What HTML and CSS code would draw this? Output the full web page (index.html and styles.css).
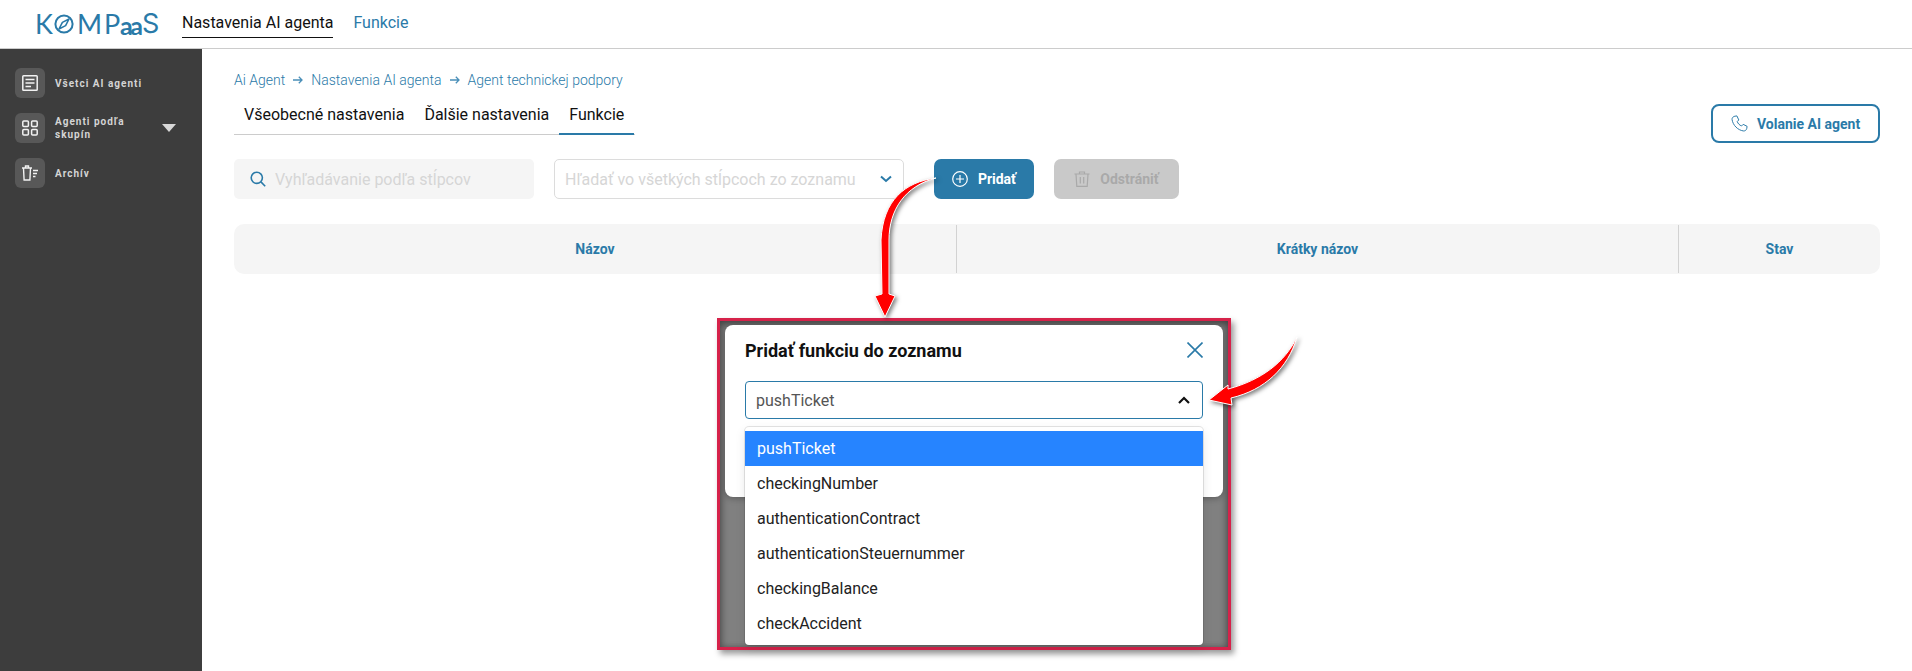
FILE: index.html
```html
<!DOCTYPE html>
<html lang="sk">
<head>
<meta charset="utf-8">
<title>Kompaas</title>
<link rel="stylesheet" href="styles.css">
</head>
<body>
<header class="topbar">
  <div class="logo">
    <span class="logo-k">K</span>
    <svg class="logo-o" viewBox="0 0 20 20" width="20" height="20"><circle cx="10" cy="10" r="8.600" fill="none" stroke="#2a7aa8" stroke-width="2"/><path d="M15 5 L11.600 11.600 L5 15 L8.400 8.400 Z" fill="none" stroke="#2a7aa8" stroke-width="1.600" stroke-linejoin="round"/></svg>
    <span class="logo-m">M</span>
    <span class="logo-p">P</span>
    <span class="logo-a">aa</span>
    <span class="logo-s">S</span>
  </div>
  <nav class="topnav">
    <a class="topnav-item active">Nastavenia AI agenta</a>
    <a class="topnav-item">Funkcie</a>
  </nav>
</header>
<div class="layout">
  <aside class="sidebar">
    <div class="side-item">
      <span class="side-icon"><svg viewBox="0 0 16 16" width="16" height="16" fill="none" stroke="#f2f2f2" stroke-width="1.500"><rect x="0.800" y="0.800" width="14.400" height="14.400" rx="0.800"/><path d="M3.500 4.500h9M3.500 8h9M3.500 11.500h5.500"/></svg></span>
      <span class="side-label">Všetci AI agenti</span>
    </div>
    <div class="side-item">
      <span class="side-icon"><svg viewBox="0 0 16 16" width="16" height="16" fill="none" stroke="#f2f2f2" stroke-width="1.500"><rect x="0.800" y="1" width="5.600" height="5.600" rx="1"/><rect x="9.600" y="1" width="5.600" height="5.600" rx="1"/><rect x="0.800" y="9.400" width="5.600" height="5.600" rx="1"/><rect x="9.600" y="9.400" width="5.600" height="5.600" rx="1"/></svg></span>
      <span class="side-label side-label-wrap">Agenti podľa skupín</span>
      <span class="side-caret"></span>
    </div>
    <div class="side-item">
      <span class="side-icon"><svg viewBox="0 0 16 16" width="16" height="16" fill="none" stroke="#f2f2f2" stroke-width="1.400"><path d="M0 3h10M3.500 3V1h3v2M1.500 3l.6 12h5.800l.6-12"/><path d="M11 5.500h5M11 8.500h4M11 11.500h2.500"/></svg></span>
      <span class="side-label">Archív</span>
    </div>
  </aside>
  <main class="main">
    <div class="toprow">
      <div class="toprow-left">
        <div class="crumbs">
          <span>Ai Agent</span>
          <svg class="crumb-arrow" viewBox="0 0 10 8" width="10" height="8" fill="none" stroke="#4a8fb8" stroke-width="1.300"><path d="M0 4h9M5.800 0.800 L9 4 L5.800 7.200"/></svg>
          <span>Nastavenia AI agenta</span>
          <svg class="crumb-arrow" viewBox="0 0 10 8" width="10" height="8" fill="none" stroke="#4a8fb8" stroke-width="1.300"><path d="M0 4h9M5.800 0.800 L9 4 L5.800 7.200"/></svg>
          <span>Agent technickej podpory</span>
        </div>
        <div class="tabs">
          <a class="tab">Všeobecné nastavenia</a>
          <a class="tab">Ďalšie nastavenia</a>
          <a class="tab tab-active">Funkcie</a>
        </div>
      </div>
      <button class="btn-outline">
        <svg viewBox="0 0 24 24" width="17" height="17" fill="none" stroke="#2a7aa8" stroke-width="1.400" stroke-linejoin="round"><path d="M5.500 1.700 L8.300 1.300 L11 7 L8.800 9.300 C9.800 12 12 14.400 14.900 15.500 L17.200 13.200 L22.700 16 L22.300 18.800 C22 21 20 22.800 17.500 22.500 C9.500 21.300 2.800 14.500 1.500 6.500 C1.200 4 3.200 2 5.500 1.700 Z"/></svg>
        Volanie AI agent
      </button>
    </div>
    <div class="filters">
      <div class="search">
        <svg viewBox="0 0 16 16" width="16" height="16" fill="none" stroke="#2a7aa8" stroke-width="1.600"><circle cx="6.800" cy="6.800" r="5.600"/><path d="M10.900 10.900 L15.200 15.200"/></svg>
        <span>Vyhľadávanie podľa stĺpcov</span>
      </div>
      <div class="select">
        <span>Hľadať vo všetkých stĺpcoch zo zoznamu</span>
        <svg viewBox="0 0 12 8" width="12" height="8" fill="none" stroke="#2a7aa8" stroke-width="2"><path d="M1 1.500 L6 6 L11 1.500"/></svg>
      </div>
      <button class="btn btn-primary">
        <svg viewBox="0 0 16 16" width="16" height="16" fill="none" stroke="#fff" stroke-width="1.200"><circle cx="8" cy="8" r="7.300"/><path d="M8 4v8M4 8h8"/></svg>
        Pridať
      </button>
      <button class="btn btn-disabled">
        <svg viewBox="0 0 16 16" width="16" height="16" fill="none" stroke="#a9a9a9" stroke-width="1.200"><path d="M0.500 3h15M5.500 3V1h5v2M2 3l.8 12.300h10.400L14 3M6.300 6v6.500M9.700 6v6.500"/></svg>
        Odstrániť
      </button>
    </div>
    <div class="table-head">
      <div class="th">Názov</div>
      <div class="th">Krátky názov</div>
      <div class="th">Stav</div>
    </div>
  </main>
</div>

<section class="shot">
  <div class="dialog">
    <div class="dialog-head">
      <h2 class="dialog-title">Pridať funkciu do zoznamu</h2>
      <svg viewBox="0 0 16 16" width="16" height="16" fill="none" stroke="#2a7aa8" stroke-width="1.600"><path d="M0.500 0.500 L15.500 15.500 M15.500 0.500 L0.500 15.500"/></svg>
    </div>
    <div class="combo">
      <span>pushTicket</span>
      <svg viewBox="0 0 12 8" width="12" height="8" fill="none" stroke="#111" stroke-width="2.200"><path d="M1 7 L6 2 L11 7"/></svg>
    </div>
    <ul class="menu">
      <li class="opt opt-active">pushTicket</li>
      <li class="opt">checkingNumber</li>
      <li class="opt">authenticationContract</li>
      <li class="opt">authenticationSteuernummer</li>
      <li class="opt">checkingBalance</li>
      <li class="opt">checkAccident</li>
    </ul>
  </div>
</section>

<svg class="arrows" viewBox="0 0 1912 671" width="1912" height="671">
  <path class="arrow" d="M936 178 C905 182 883 200 881 240 L882 294 L875 296 L885 317 L895 296 L889 294 L889 240 C889 210 905 186 936 178 Z"/>
  <path class="arrow" d="M1297 337 C1285 362 1262 380 1228 389 L1228 385 L1209 400 L1232 405 L1231 398 C1265 390 1288 368 1297 337 Z"/>
</svg>
</body>
</html>
```

FILE: styles.css
```css
* { box-sizing: border-box; }
html, body { margin: 0; padding: 0; height: 671px; overflow: hidden; background: #fff; }
body { font-family: Roboto, "Liberation Sans", sans-serif; color: #111; position: relative; }

.topbar { height: 49px; border-bottom: 1px solid #ccc; display: flex; align-items: flex-start; padding-left: 35px; background: #fff; }
.logo { width: 147px; height: 48px; display: flex; align-items: center; color: #2a7aa8; font-family: Lato, Roboto, sans-serif; font-size: 27px; line-height: 48px; flex: none; }
.logo-k { width: 19px; }
.logo-o { flex: none; margin-right: 3px; }
.logo-m { width: 27px; }
.logo-p { width: 16px; }
.logo-a { width: 22px; font-size: 25px; font-weight: 700; letter-spacing: -2.500px; padding-top: 2px; }
.logo-s { width: 17px; font-family: Inter, Lato, sans-serif; }
.topnav { display: flex; gap: 20px; height: 38px; }
.topnav-item { font-size: 16px; line-height: 46px; color: #2a7aa8; height: 38px; }
.topnav-item.active { color: #111; border-bottom: 1px solid #111; }

.layout { display: flex; height: 622px; }
.sidebar { width: 202px; flex: none; background: #3d3d3d; padding: 19px 15px 0; display: flex; flex-direction: column; gap: 15px; }
.side-item { display: flex; align-items: center; height: 30px; }
.side-icon { width: 30px; height: 30px; border-radius: 6px; background: #585858; display: flex; align-items: center; justify-content: center; flex: none; }
.side-label { margin-left: 10px; font-size: 10px; line-height: 13px; font-weight: 700; letter-spacing: 1px; color: #d4d4d4; }
.side-label-wrap { width: 90px; }
.side-caret { margin-left: 17px; border-left: 7px solid transparent; border-right: 7px solid transparent; border-top: 8px solid #d8d8d8; }

.main { flex: 1; padding: 22px 32px 0; min-width: 0; }
.toprow { display: flex; justify-content: space-between; align-items: flex-end; margin-bottom: 16px; }
.toprow-left { padding-bottom: 8px; }
.crumbs { display: flex; align-items: center; font-size: 14px; font-weight: 300; line-height: 18px; color: #2a7aa8; margin-bottom: 9px; }
.crumb-arrow { margin: 0 8px; flex: none; }
.tabs { display: flex; border-bottom: 1px solid #ccc; height: 37px; width: 401px; }
.tab { padding: 0 10px; font-size: 16px; line-height: 34px; height: 37px; color: #111; white-space: nowrap; }
.tab-active { border-bottom: 2px solid #2a7aa8; }

.btn-outline { height: 39px; width: 169px; border: 2px solid #2a7aa8; border-radius: 8px; background: #fff; color: #2a7aa8; font: 700 14px Roboto, sans-serif; display: flex; align-items: center; gap: 9px; padding: 0 0 0 18px; }

.filters { display: flex; height: 40px; margin-bottom: 25px; }
.search { width: 300px; background: #f5f5f5; border-radius: 5px; display: flex; align-items: center; gap: 9px; padding-left: 16px; font-size: 16px; color: #d6d6d6; margin-right: 20px; }
.select { width: 350px; border: 1px solid #dcdcdc; border-radius: 5px; display: flex; align-items: center; justify-content: space-between; padding: 0 11px 0 10px; font-size: 16px; color: #d6d6d6; margin-right: 30px; }
.select span { white-space: nowrap; }
.btn { height: 40px; border: 0; border-radius: 7px; display: flex; align-items: center; justify-content: center; gap: 10px; font: 700 14px Roboto, sans-serif; }
.btn-primary { width: 100px; background: #2a7aa8; color: #fff; margin-right: 20px; }
.btn-disabled { width: 125px; background: #c9c9c9; color: #a9a9a9; }

.table-head { display: grid; grid-template-columns: 723px 722px 1fr; height: 50px; background: #f5f5f5; border-radius: 10px; padding: 1px 0; }
.th { display: flex; align-items: center; justify-content: center; font-size: 14px; font-weight: 700; color: #2a7aa8; border-right: 1px solid #d2d2d2; }
.th:last-child { border-right: 0; }

.shot { position: absolute; left: 717px; top: 318px; width: 514px; height: 332px; border: 3px solid #d6224a; background: #808080; box-shadow: inset 0 4px 7px rgba(0,0,0,.35), inset 3px 0 6px rgba(0,0,0,.14), inset -3px 0 6px rgba(0,0,0,.14), 3px 4px 6px rgba(0,0,0,.4); padding: 4px 5px; }
.dialog { position: relative; width: 498px; height: 172px; background: #fff; border-radius: 8px; padding: 0 20px; box-shadow: 0 2px 6px rgba(0,0,0,.25); }
.dialog-head { height: 50px; margin-bottom: 6px; display: flex; align-items: center; justify-content: space-between; }
.dialog-title { margin: 0; font-size: 18px; font-weight: 700; color: #111; }
.combo { height: 38px; border: 1px solid #2a7aa8; border-radius: 4px; display: flex; align-items: center; justify-content: space-between; padding: 0 12px 0 10px; font-size: 16px; color: #555; }
.menu { position: absolute; left: 20px; top: 102px; width: 458px; margin: 0; padding: 4px 0; list-style: none; background: #fff; border-radius: 4px; box-shadow: 0 0 0 1px rgba(0,0,0,.1), 0 4px 11px rgba(0,0,0,.1); }
.opt { height: 35px; line-height: 35px; padding-left: 12px; font-size: 16px; color: #222; }
.opt-active { background: #2684ff; color: #fff; }

.arrows { position: absolute; left: 0; top: 0; pointer-events: none; }
.arrow { fill: #ff0000; stroke: #fff; stroke-width: 1; stroke-linejoin: round; filter: drop-shadow(2px 2px 2px rgba(0,0,0,.5)); }
```
